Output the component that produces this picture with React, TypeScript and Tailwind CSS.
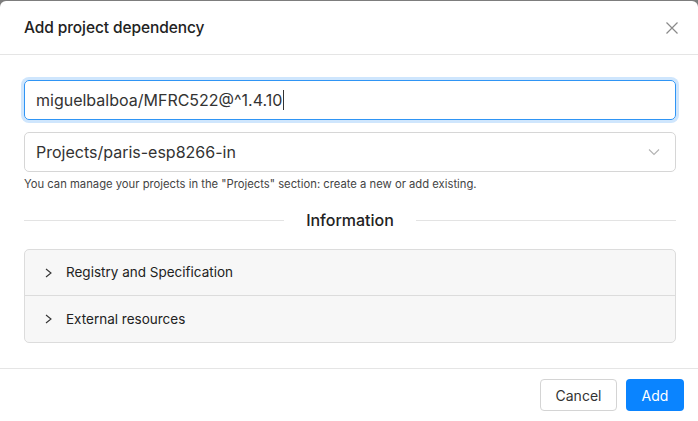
import React from "react";

export default function App() {
  return (
    <div
      className="w-[698px] h-[421px] overflow-hidden bg-[#7d7d7d] pt-px"
      style={{ fontFamily: "Inter, 'Noto Sans', 'Liberation Sans', sans-serif" }}
    >
      <div className="bg-white rounded-t-[6px] h-[460px] text-[#333]">
        {/* Header */}
        <div className="h-[54px] flex items-center justify-between pl-6 pr-[19px] border-b border-[#e5e5e5]">
          <div className="text-[15.5px] font-medium text-[#222] tracking-[-0.1px]">Add project dependency</div>
          <svg width="14" height="14" viewBox="0 0 14 14">
            <path d="M1.5 1.5 L12.5 12.5 M12.5 1.5 L1.5 12.5" stroke="#8a8a8a" strokeWidth="1.2" fill="none" />
          </svg>
        </div>

        {/* Body */}
        <div className="pl-6 pr-[22px] pt-[25px]">
          <div className="h-10 rounded-[5px] border border-[#2f95f5] ring-[3px] ring-[#cfe6fd] flex items-center px-[11px] text-[16px] text-[#333]">
            <span>miguelbalboa/MFRC522@^1.4.10</span>
            <span className="inline-block w-px h-[20px] bg-[#333] ml-px" />
          </div>

          <div className="mt-3 h-10 rounded-[5px] border border-[#d6d6d6] flex items-center justify-between px-[11px] text-[16px] text-[#333]">
            <span>Projects/paris-esp8266-in</span>
            <svg width="12" height="8" viewBox="0 0 12 8" className="mr-1">
              <path d="M1 1.5 L6 6.5 L11 1.5" stroke="#b3b3b3" strokeWidth="1.1" fill="none" />
            </svg>
          </div>

          <div className="mt-[5px] text-[11.25px] leading-[14px] text-[#444]">
            You can manage your projects in the "Projects" section: create a new or add existing.
          </div>

          <div className="mt-[17px] flex items-center gap-[22px]">
            <div className="flex-1 h-px bg-[#e3e3e3]" />
            <div className="text-[16px] font-medium text-[#222]">Information</div>
            <div className="flex-1 h-px bg-[#e3e3e3]" />
          </div>

          <div className="mt-[17px] rounded-[5px] border border-[#dcdcdc] bg-[#f7f7f7] text-[13.5px] text-[#222]">
            <div className="h-[46px] flex items-center pl-[20px] border-b border-[#dcdcdc]">
              <svg width="7" height="10" viewBox="0 0 7 10" className="mr-[14px]">
                <path d="M1 1 L6 5 L1 9" stroke="#333" strokeWidth="1.1" fill="none" />
              </svg>
              <span>Registry and Specification</span>
            </div>
            <div className="h-[46px] flex items-center pl-[20px]">
              <svg width="7" height="10" viewBox="0 0 7 10" className="mr-[14px]">
                <path d="M1 1 L6 5 L1 9" stroke="#333" strokeWidth="1.1" fill="none" />
              </svg>
              <span>External resources</span>
            </div>
          </div>
        </div>

        {/* Footer */}
        <div className="mt-[25px] border-t border-[#e5e5e5] flex justify-end gap-[9px] pt-[10px] pr-[14px]">
          <button className="h-[32px] w-[77px] rounded-[4px] border border-[#d4d4d4] bg-white text-[14px] text-[#333]">
            Cancel
          </button>
          <button className="h-[32px] w-[58px] rounded-[4px] bg-[#0a84ff] text-[14px] text-white">
            Add
          </button>
        </div>
      </div>
    </div>
  );
}
